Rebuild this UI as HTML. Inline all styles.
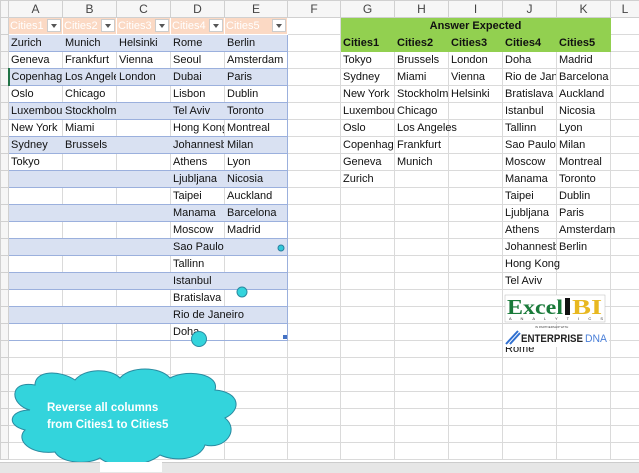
<!DOCTYPE html>
<html><head><meta charset="utf-8"><style>
body{margin:0;width:639px;height:472px;overflow:hidden;background:#fff;font-family:"Liberation Sans",sans-serif;font-size:11px;color:#111;position:relative}
table{border-collapse:collapse;table-layout:fixed;position:absolute;left:0;top:0;width:639px}
td{height:16px;padding:0;border:1px solid #dadada;white-space:nowrap;overflow:hidden;position:relative;line-height:16px;max-width:0}
td span{position:relative;z-index:2;padding-left:2px}
td.v{overflow:visible}
tr.h td{height:15px;background:#f6f6f6;text-align:center;color:#444;font-size:12px;border-color:#d0d0d0}
td.rh{background:#f6f6f6;border-color:#d0d0d0}
.b td.t{background:#d9e1f2;border-left-color:#d9e1f2;border-right-color:#d9e1f2}
td.t{border-top:1px solid #9bb0dd;border-bottom:1px solid #9bb0dd}
td.tl{border-left:1px solid #9bb0dd!important}
td.tr{border-right:1px solid #9bb0dd!important}
td.o{background:#fbd9c4;color:#fff;border-color:#fff}
td.o span{padding-left:1px}
td.o i{position:absolute;right:1px;top:1px;width:14px;height:13px;background:#fff;border:1px solid #ccc;box-sizing:border-box;z-index:3}
td.o i:after{content:"";position:absolute;left:3px;top:4px;border-left:3px solid transparent;border-right:3px solid transparent;border-top:4px solid #555}
td.g{background:#92d050;font-weight:bold;border-color:#92d050}
</style></head><body>
<table>
<colgroup><col style="width:8px"><col style="width:54px"><col style="width:54px"><col style="width:54px"><col style="width:54px"><col style="width:63px"><col style="width:53px"><col style="width:54px"><col style="width:54px"><col style="width:54px"><col style="width:54px"><col style="width:54px"><col style="width:29px"></colgroup>
<tr class="h"><td></td><td>A</td><td>B</td><td>C</td><td>D</td><td>E</td><td>F</td><td>G</td><td>H</td><td>I</td><td>J</td><td>K</td><td>L</td></tr>
<tr><td class="rh"></td><td class="o"><span>Cities1</span><i></i></td><td class="o"><span>Cities2</span><i></i></td><td class="o"><span>Cities3</span><i></i></td><td class="o"><span>Cities4</span><i></i></td><td class="o"><span>Cities5</span><i></i></td><td></td><td class="g" colspan="5" style="text-align:center">Answer Expected</td><td></td></tr>
<tr class="b"><td class="rh"></td><td class="t tl"><span>Zurich</span></td><td class="t"><span>Munich</span></td><td class="t"><span>Helsinki</span></td><td class="t"><span>Rome</span></td><td class="t tr"><span>Berlin</span></td><td></td><td class="g"><span>Cities1</span></td><td class="g"><span>Cities2</span></td><td class="g"><span>Cities3</span></td><td class="g"><span>Cities4</span></td><td class="g"><span>Cities5</span></td><td></td></tr>
<tr><td class="rh"></td><td class="t tl"><span>Geneva</span></td><td class="t"><span>Frankfurt</span></td><td class="t"><span>Vienna</span></td><td class="t"><span>Seoul</span></td><td class="t tr v"><span>Amsterdam</span></td><td></td><td><span>Tokyo</span></td><td><span>Brussels</span></td><td><span>London</span></td><td><span>Doha</span></td><td><span>Madrid</span></td><td></td></tr>
<tr class="b"><td class="rh" style="border-right:2px solid #217346"></td><td class="t tl"><span>Copenhagen</span></td><td class="t"><span>Los Angeles</span></td><td class="t"><span>London</span></td><td class="t"><span>Dubai</span></td><td class="t tr"><span>Paris</span></td><td></td><td><span>Sydney</span></td><td><span>Miami</span></td><td><span>Vienna</span></td><td><span>Rio de Janeiro</span></td><td class="v"><span>Barcelona</span></td><td></td></tr>
<tr><td class="rh"></td><td class="t tl"><span>Oslo</span></td><td class="t"><span>Chicago</span></td><td class="t"></td><td class="t"><span>Lisbon</span></td><td class="t tr"><span>Dublin</span></td><td></td><td><span>New York</span></td><td><span>Stockholm</span></td><td><span>Helsinki</span></td><td><span>Bratislava</span></td><td><span>Auckland</span></td><td></td></tr>
<tr class="b"><td class="rh"></td><td class="t tl"><span>Luxembourg</span></td><td class="t v"><span>Stockholm</span></td><td class="t"></td><td class="t"><span>Tel Aviv</span></td><td class="t tr"><span>Toronto</span></td><td></td><td><span>Luxembourg</span></td><td><span>Chicago</span></td><td></td><td><span>Istanbul</span></td><td><span>Nicosia</span></td><td></td></tr>
<tr><td class="rh"></td><td class="t tl"><span>New York</span></td><td class="t"><span>Miami</span></td><td class="t"></td><td class="t"><span>Hong Kong</span></td><td class="t tr"><span>Montreal</span></td><td></td><td><span>Oslo</span></td><td class="v"><span>Los Angeles</span></td><td></td><td><span>Tallinn</span></td><td><span>Lyon</span></td><td></td></tr>
<tr class="b"><td class="rh"></td><td class="t tl"><span>Sydney</span></td><td class="t"><span>Brussels</span></td><td class="t"></td><td class="t"><span>Johannesburg</span></td><td class="t tr"><span>Milan</span></td><td></td><td><span>Copenhagen</span></td><td><span>Frankfurt</span></td><td></td><td><span>Sao Paulo</span></td><td><span>Milan</span></td><td></td></tr>
<tr><td class="rh"></td><td class="t tl"><span>Tokyo</span></td><td class="t"></td><td class="t"></td><td class="t"><span>Athens</span></td><td class="t tr"><span>Lyon</span></td><td></td><td><span>Geneva</span></td><td><span>Munich</span></td><td></td><td><span>Moscow</span></td><td><span>Montreal</span></td><td></td></tr>
<tr class="b"><td class="rh"></td><td class="t tl"></td><td class="t"></td><td class="t"></td><td class="t"><span>Ljubljana</span></td><td class="t tr"><span>Nicosia</span></td><td></td><td><span>Zurich</span></td><td></td><td></td><td><span>Manama</span></td><td><span>Toronto</span></td><td></td></tr>
<tr><td class="rh"></td><td class="t tl"></td><td class="t"></td><td class="t"></td><td class="t"><span>Taipei</span></td><td class="t tr"><span>Auckland</span></td><td></td><td></td><td></td><td></td><td><span>Taipei</span></td><td><span>Dublin</span></td><td></td></tr>
<tr class="b"><td class="rh"></td><td class="t tl"></td><td class="t"></td><td class="t"></td><td class="t"><span>Manama</span></td><td class="t tr"><span>Barcelona</span></td><td></td><td></td><td></td><td></td><td><span>Ljubljana</span></td><td><span>Paris</span></td><td></td></tr>
<tr><td class="rh"></td><td class="t tl"></td><td class="t"></td><td class="t"></td><td class="t"><span>Moscow</span></td><td class="t tr"><span>Madrid</span></td><td></td><td></td><td></td><td></td><td><span>Athens</span></td><td class="v"><span>Amsterdam</span></td><td></td></tr>
<tr class="b"><td class="rh"></td><td class="t tl"></td><td class="t"></td><td class="t"></td><td class="t v"><span>Sao Paulo</span></td><td class="t tr"></td><td></td><td></td><td></td><td></td><td><span>Johannesburg</span></td><td><span>Berlin</span></td><td></td></tr>
<tr><td class="rh"></td><td class="t tl"></td><td class="t"></td><td class="t"></td><td class="t"><span>Tallinn</span></td><td class="t tr"></td><td></td><td></td><td></td><td></td><td class="v"><span>Hong Kong</span></td><td></td><td></td></tr>
<tr class="b"><td class="rh"></td><td class="t tl"></td><td class="t"></td><td class="t"></td><td class="t"><span>Istanbul</span></td><td class="t tr"></td><td></td><td></td><td></td><td></td><td><span>Tel Aviv</span></td><td></td><td></td></tr>
<tr><td class="rh"></td><td class="t tl"></td><td class="t"></td><td class="t"></td><td class="t v"><span>Bratislava</span></td><td class="t tr"></td><td></td><td></td><td></td><td></td><td></td><td></td><td></td></tr>
<tr class="b"><td class="rh"></td><td class="t tl"></td><td class="t"></td><td class="t"></td><td class="t v"><span>Rio de Janeiro</span></td><td class="t tr"></td><td></td><td></td><td></td><td></td><td></td><td></td><td></td></tr>
<tr><td class="rh"></td><td class="t tl"></td><td class="t"></td><td class="t"></td><td class="t"><span>Doha</span></td><td class="t tr"></td><td></td><td></td><td></td><td></td><td></td><td></td><td></td></tr>
<tr><td class="rh"></td><td></td><td></td><td></td><td></td><td></td><td></td><td></td><td></td><td></td><td><span>Rome</span></td><td></td><td></td></tr>
<tr><td class="rh"></td><td></td><td></td><td></td><td></td><td></td><td></td><td></td><td></td><td></td><td></td><td></td><td></td></tr>
<tr><td class="rh"></td><td></td><td></td><td></td><td></td><td></td><td></td><td></td><td></td><td></td><td></td><td></td><td></td></tr>
<tr><td class="rh"></td><td></td><td></td><td></td><td></td><td></td><td></td><td></td><td></td><td></td><td></td><td></td><td></td></tr>
<tr><td class="rh"></td><td></td><td></td><td></td><td></td><td></td><td></td><td></td><td></td><td></td><td></td><td></td><td></td></tr>
<tr><td class="rh"></td><td></td><td></td><td></td><td></td><td></td><td></td><td></td><td></td><td></td><td></td><td></td><td></td></tr>
<tr><td class="rh"></td><td></td><td></td><td></td><td></td><td></td><td></td><td></td><td></td><td></td><td></td><td></td><td></td></tr>
</table>
<div style="position:absolute;left:283px;top:335px;width:4px;height:4px;background:#4472c4;z-index:5"></div>
<svg style="position:absolute;left:0;top:0;z-index:6" width="639" height="472">
<circle cx="281" cy="248" r="3" fill="#33c8d8" stroke="#2a7fa0"/>
<circle cx="242" cy="292" r="5" fill="#33d4dc" stroke="#2a8aa0"/>
<circle cx="199" cy="339" r="7.5" fill="#33d4dc" stroke="#2a8aa0"/>
<g fill="#33d4dc" stroke="#2a8aa0" stroke-width="1">
<path d="M30 410 C10 405 8 380 35 385 C35 370 60 370 75 380 C85 368 110 368 120 378 C130 366 160 366 170 378 C190 368 220 375 215 390 C240 392 242 410 225 418 C240 430 225 450 205 445 C200 460 175 462 160 455 C145 468 110 468 100 458 C85 466 60 462 55 452 C30 455 15 440 25 430 C5 425 10 410 30 410 Z"/>
</g>
<text x="47" y="411" fill="#fff" font-family="Liberation Sans,sans-serif" font-size="11.5" font-weight="bold">Reverse all columns</text>
<text x="47" y="428" fill="#fff" font-family="Liberation Sans,sans-serif" font-size="11.5" font-weight="bold">from Cities1 to Cities5</text>
<rect x="505" y="295" width="100" height="27" fill="#fff" stroke="#bbb" stroke-width="0.5"/>
<text x="507" y="314" fill="#1a7a3a" font-family="Liberation Serif,serif" font-size="21" font-weight="bold" textLength="56" lengthAdjust="spacingAndGlyphs">Excel</text>
<rect x="565" y="298" width="5" height="17" fill="#111"/>
<text x="572" y="314" fill="#e8b820" font-family="Liberation Serif,serif" font-size="21" font-weight="bold" textLength="30" lengthAdjust="spacingAndGlyphs">BI</text>
<text x="509" y="320" fill="#333" font-family="Liberation Sans,sans-serif" font-size="4" textLength="94">A N A L Y T I C S</text>
<text x="535" y="328" fill="#444" font-family="Liberation Sans,sans-serif" font-size="3">IN PARTNERSHIP WITH</text>
<rect x="503" y="330" width="106" height="17" fill="#fff"/>
<path d="M506 344 L518 331 M510 344 L520 333" stroke="#3070d0" stroke-width="2"/>
<text x="521" y="342" fill="#222" font-family="Liberation Sans,sans-serif" font-size="11" font-weight="bold" textLength="62" lengthAdjust="spacingAndGlyphs">ENTERPRISE</text>
<text x="585" y="342" fill="#4a7fd8" font-family="Liberation Sans,sans-serif" font-size="11" textLength="22" lengthAdjust="spacingAndGlyphs">DNA</text>
</svg>
<div style="position:absolute;left:0;top:462px;width:639px;height:10px;background:#e6e6e6;border-top:1px solid #ccc;z-index:7"></div>
<div style="position:absolute;left:100px;top:462px;width:62px;height:10px;background:#fff;z-index:8"></div>
</body></html>
